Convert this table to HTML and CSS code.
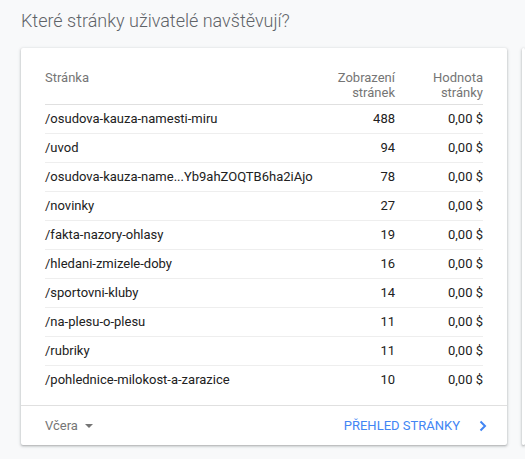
FILE: index.html
```html
<!DOCTYPE html>
<html lang="cs">
<head>
<meta charset="utf-8">
<link rel="stylesheet" href="styles.css">
</head>
<body>
<h2 class="title">Které stránky uživatelé navštěvují?</h2>
<div class="cards">
  <section class="card">
    <div class="card-body">
      <table class="tbl">
        <thead>
          <tr>
            <th class="c-page">Stránka</th>
            <th class="c-num">Zobrazení<br>stránek</th>
            <th class="c-val">Hodnota<br>stránky</th>
          </tr>
        </thead>
        <tbody>
          <tr><td class="c-page">/osudova-kauza-namesti-miru</td><td class="c-num">488</td><td class="c-val">0,00 $</td></tr>
          <tr><td class="c-page">/uvod</td><td class="c-num">94</td><td class="c-val">0,00 $</td></tr>
          <tr><td class="c-page">/osudova-kauza-name...Yb9ahZOQTB6ha2iAjo</td><td class="c-num">78</td><td class="c-val">0,00 $</td></tr>
          <tr><td class="c-page">/novinky</td><td class="c-num">27</td><td class="c-val">0,00 $</td></tr>
          <tr><td class="c-page">/fakta-nazory-ohlasy</td><td class="c-num">19</td><td class="c-val">0,00 $</td></tr>
          <tr><td class="c-page">/hledani-zmizele-doby</td><td class="c-num">16</td><td class="c-val">0,00 $</td></tr>
          <tr><td class="c-page">/sportovni-kluby</td><td class="c-num">14</td><td class="c-val">0,00 $</td></tr>
          <tr><td class="c-page">/na-plesu-o-plesu</td><td class="c-num">11</td><td class="c-val">0,00 $</td></tr>
          <tr><td class="c-page">/rubriky</td><td class="c-num">11</td><td class="c-val">0,00 $</td></tr>
          <tr><td class="c-page">/pohlednice-milokost-a-zarazice</td><td class="c-num">10</td><td class="c-val">0,00 $</td></tr>
        </tbody>
      </table>
    </div>
    <div class="card-foot">
      <div class="range">Včera<span class="caret"></span></div>
      <div class="link">PŘEHLED STRÁNKY
        <svg class="chev" width="8" height="12" viewBox="0 0 8 12"><path d="M1.5 1.5 L6 6 L1.5 10.5" fill="none" stroke="#4285f4" stroke-width="2"/></svg>
      </div>
    </div>
  </section>
  <section class="card card-next"></section>
</div>
</body>
</html>
```
FILE: styles.css
```css
html, body {
  margin: 0;
  padding: 0;
  background: #f8f9fa;
  overflow: hidden;
}
body {
  font-family: Roboto, "Liberation Sans", sans-serif;
  width: 525px;
  height: 459px;
  padding-left: 21px;
  box-sizing: border-box;
}
.title {
  margin: 0;
  padding-top: 9px;
  font-size: 18px;
  line-height: 24px;
  font-weight: 300;
  color: #5f6368;
}
.cards {
  display: flex;
  gap: 15px;
  margin-top: 15px;
}
.card {
  flex: none;
  width: 486px;
  background: #fff;
  border-radius: 2px;
  box-shadow: 0 1px 2px rgba(60,64,67,.3), 0 1px 3px 1px rgba(60,64,67,.12);
}
.card-next {
  flex: 1;
  width: auto;
  min-width: 0;
  height: 397px;
}
.card-body {
  padding: 22px 24px 11px;
}
.tbl {
  width: 100%;
  border-collapse: collapse;
  font-size: 13px;
}
.tbl th {
  font-weight: 400;
  color: #757575;
  line-height: 15px;
  padding: 0 0 4px;
  vertical-align: top;
  border-bottom: 1px solid #e0e0e0;
}
.tbl td {
  color: #212121;
  line-height: 28px;
  padding: 0;
  border-bottom: 1px solid #eeeeee;
  white-space: nowrap;
}
.tbl tbody tr:last-child td {
  border-bottom: none;
}
.c-page { text-align: left; }
.c-num { text-align: right; width: 70px; }
.c-val { text-align: right; width: 88px; }
.card-foot {
  border-top: 1px solid #e0e0e0;
  height: 39px;
  padding: 0 20px 0 24px;
  display: flex;
  align-items: center;
  justify-content: space-between;
  font-size: 13px;
}
.range {
  color: #757575;
  display: flex;
  align-items: center;
}
.caret {
  margin-left: 7px;
  width: 0;
  height: 0;
  border-left: 4px solid transparent;
  border-right: 4px solid transparent;
  border-top: 4px solid #757575;
}
.link {
  color: #4285f4;
  display: flex;
  align-items: center;
  gap: 19px;
}
.chev { display: block; }
```
